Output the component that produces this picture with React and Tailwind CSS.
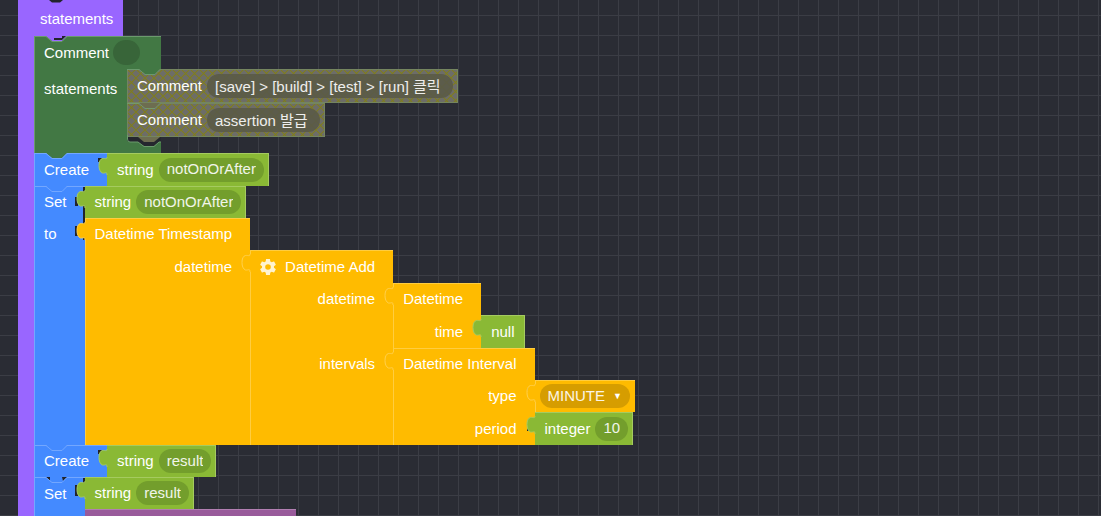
import React from "react";

const NOTCH = "M0 0 H12 L18 5 H28 L33 0";
const TAB = "C10 7 8.500 5 5.500 5.500 C3 6 2 9 2 12.500 C2 16 3 19 5.500 20 C8.500 20.500 10 18 10 22";

function Notch({ fill, stroke, gap }) {
  return (
    <svg className="pointer-events-none absolute top-0 left-0 z-10" width="36" height="8" viewBox="0 0 36 8" fill="none" aria-hidden="true">
      <path d="M12 0 L18 5 H28 L33 0 Z" fill={fill} />
      {gap && <path d={gap} fill="#22242b" />}
      <path d={NOTCH} transform="translate(0 .5)" stroke={stroke} />
    </svg>
  );
}

function Tab({ fill, stroke, gap }) {
  return (
    <svg className="pointer-events-none absolute top-0 -left-2.5 z-10" width="12" height="32" viewBox="0 0 12 32" fill="none" aria-hidden="true">
      {gap && <path d={gap} fill="#22242b" />}
      <path d={"M12 4 H10 " + TAB + " H12 Z"} fill={fill} />
      <path d={"M10 4 " + TAB} stroke={stroke} />
    </svg>
  );
}

const LIME = { bg: "bg-[#8ab935] shadow-[inset_-1px_1px_0_#a5cb60]", fill: "#8ab935", stroke: "#a5cb60" };
const AMBER = { bg: "bg-[#ffbb00] shadow-[inset_1px_1px_0_#ffcd40]", fill: "#ffbb00", stroke: "#ffd04c" };
const BLUE = "bg-[#448aff] shadow-[inset_1px_1px_0_#73a7ff]";

function Field({ label, value, className }) {
  return (
    <input
      aria-label={label}
      defaultValue={value}
      className={"field-sizing-content rounded-full pb-0.5 text-white/90 outline-none " + className}
    />
  );
}

function Value({ tone, gap, className = "h-8 pr-[5px]", children }) {
  return (
    <div className={"relative flex w-max items-center gap-[5px] pl-2.5 " + tone.bg + " " + className}>
      <Tab fill={tone.fill} stroke={tone.stroke} gap={gap} />
      {children}
    </div>
  );
}

function StringValue({ name, gap, className }) {
  return (
    <Value tone={LIME} gap={gap} className={className}>
      <span>string</span>
      <Field label="Variable name" value={name} className="h-6 bg-[#739e2c] px-2" />
    </Value>
  );
}

/* A block whose inputs hang to the right of its label column. */
function Outputs({ labels, gap, offset = "pt-8", children }) {
  return (
    <div className="relative flex w-max">
      <Tab fill={AMBER.fill} stroke={AMBER.stroke} gap={gap} />
      <div className={"pr-[18px] pl-2.5 " + AMBER.bg}>{labels}</div>
      <div className={offset}>{children}</div>
    </div>
  );
}

function Label({ children, className = "h-8 justify-end" }) {
  return <div className={"flex items-center " + className}>{children}</div>;
}

function CommentBlock({ text, above, aboveStroke }) {
  return (
    <div className="relative flex h-[34px] w-max items-center gap-[5px] bg-[#6d6d68] pr-[5px] pl-2.5">
      <svg className="absolute inset-0 h-full w-full" aria-hidden="true">
        <defs>
          <pattern id="crosshatch" width="9" height="9" patternUnits="userSpaceOnUse">
            <path d="M-1 -1 L10 10 M10 -1 L-1 10" stroke="#807d1c" strokeWidth="1.1" fill="none" />
          </pattern>
        </defs>
        <rect width="100%" height="100%" fill="url(#crosshatch)" />
      </svg>
      <div className="absolute inset-0 shadow-[inset_0_0_0_1px_#74855f]" />
      <Notch fill={above} stroke={aboveStroke} />
      <span className="relative">Comment</span>
      <Field label="Comment" value={text} className="relative h-6 bg-[#5a5a48]/90 pr-3 pl-2" />
    </div>
  );
}

function Gear() {
  return (
    <svg width="16" height="16" viewBox="2 2 20 20" fill="#fff3cf" aria-hidden="true">
      <path d="M19.430 12.980c.04-.32.070-.64.070-.98s-.03-.66-.07-.98l2.110-1.650c.19-.15.240-.42.120-.64l-2-3.460c-.12-.22-.39-.3-.61-.22l-2.490 1c-.52-.4-1.080-.73-1.690-.98l-.38-2.650C14.460 2.180 14.250 2 14 2h-4c-.25 0-.46.180-.49.420l-.38 2.650c-.61.250-1.170.590-1.690.980l-2.490-1c-.23-.09-.49 0-.61.220l-2 3.460c-.13.220-.07.490.120.640l2.110 1.650c-.04.320-.07.650-.07.980s.03.660.070.980l-2.110 1.650c-.19.150-.24.420-.12.640l2 3.460c.12.220.390.300.610.220l2.490-1c.52.400 1.080.730 1.690.980l.38 2.650c.03.240.240.420.490.420h4c.25 0 .46-.18.490-.42l.38-2.650c.61-.25 1.170-.59 1.690-.98l2.490 1c.23.090.490 0 .61-.22l2-3.460c.12-.22.070-.49-.12-.64l-2.110-1.650zM12 15.500a3.500 3.500 0 1 1 0-7 3.500 3.500 0 0 1 0 7z" />
    </svg>
  );
}

function Create({ name, above, className }) {
  return (
    <div className={"relative flex " + className}>
      <Notch fill={above} stroke="#73a7ff" />
      <div className={"flex items-center pr-[18px] pl-2.5 " + BLUE}>Create</div>
      <StringValue name={name} gap="M1 5 H5 V7 L3 9 H1 Z" className="h-full pr-[5px]" />
    </div>
  );
}

export default function App() {
  return (
    <main
      className="h-screen w-full overflow-hidden bg-[#2a2c34] bg-[linear-gradient(to_right,#3b3d45_1px,transparent_1px),linear-gradient(to_bottom,#3b3d45_1px,transparent_1px)] bg-size-[20px_20px] bg-position-[18px_15px] pl-[18px] text-[15px] leading-5 whitespace-nowrap text-white"
      style={{ fontFamily: '"Liberation Sans", "Noto Sans CJK KR", sans-serif' }}
    >
      <div className="relative flex h-9 w-max items-center bg-[#9966ff] pt-0.5 pr-2.5 pl-[22px]">
        <svg className="absolute top-0 left-7" width="20" height="4" viewBox="0 0 20 4" aria-hidden="true">
          <path d="M3 0 L6 2.500 H14 L17 0 Z" fill="#22242b" />
        </svg>
        statements
      </div>
      <div className="w-max bg-[linear-gradient(to_right,#9966ff_16px,transparent_16px)] pl-4">
        {/* Comment with nested statements */}
        <div className="relative w-max">
          <Notch fill="#9966ff" stroke="#6b9a6d" gap="M20 2 H28 V4 H20 Z M28 0 H32 L28 4 Z" />
          <div className="flex h-[33px] w-[127px] items-center gap-1 bg-[#427844] pl-2.5 shadow-[inset_0_1px_0_#6b9a6d,inset_1px_0_0_#6b9a6d]">
            Comment
            <Field label="Comment" value="" className="h-[25px] w-[27px] bg-[#386539]" />
          </div>
          <div className="flex">
            <div className="w-[93px] bg-[#427844] pt-2.5 pl-2.5 shadow-[inset_1px_0_0_#6b9a6d]">statements</div>
            <div className="pb-1">
              <CommentBlock text="[save] > [build] > [test] > [run] 클릭" above="#427844" aboveStroke="#6b9a6d" />
              <CommentBlock text="assertion 발급" above="#6d6d50" aboveStroke="#74996a" />
            </div>
          </div>
          <div className="relative h-3 w-[127px] bg-[#427844] shadow-[inset_1px_0_0_#6b9a6d]">
            <svg className="absolute -top-1.5 left-[93px]" width="34" height="12" viewBox="0 0 34 12" fill="none" aria-hidden="true">
              <path d="M0 2 H34 V7 H32 L27 11 H17 L11 7 H3 Q0 7 0 4 Z" fill="#25272e" />
              <path d="M.5 0 V4 Q.5 7 3 7 H11 L17 11.500 H27 L32 7 H34" stroke="#6b9a6d" />
              <path d="M11 2 L17 7 H27 L33 2 Z" fill="#6d6d50" />
            </svg>
          </div>
        </div>

        <Create name="notOnOrAfter" above="#427844" className="h-[33px]" />

        {/* Set notOnOrAfter */}
        <div className="relative flex">
          <Notch fill="#448aff" stroke="#73a7ff" />
          <div className={"pr-[18px] pl-2.5 " + BLUE}>
            <Label className="h-8">Set</Label>
            <Label className="h-8">to</Label>
          </div>
          <div>
            <StringValue name="notOnOrAfter" gap="M0 11 H3 V20 H0 Z M8 1 H10 V6 H8 Z M8 20 H10 V32 H8 Z" />
            <Outputs
              gap="M0 8 H3 V18 H0 Z M8 0 H10 V6 H8 Z M8 20 H10 V22 H8 Z"
              labels={
                <>
                  <Label>Datetime Timestamp</Label>
                  <Label className="h-[33px] justify-end">datetime</Label>
                </>
              }
            >
              <Outputs
                offset="pt-[33px]"
                labels={
                  <>
                    <Label className="h-[33px] justify-end gap-[9px]">
                      <button type="button" aria-label="Edit intervals">
                        <Gear />
                      </button>
                      Datetime Add
                    </Label>
                    <Label>datetime</Label>
                    <Label className="mt-[33px] h-8 justify-end">intervals</Label>
                  </>
                }
              >
                <Outputs
                  labels={
                    <>
                      <Label>Datetime</Label>
                      <Label className="h-[33px] justify-end">time</Label>
                    </>
                  }
                >
                  <Value tone={LIME} className="h-[33px] pr-2.5">null</Value>
                </Outputs>
                <Outputs
                  labels={
                    <>
                      <Label>Datetime Interval</Label>
                      <Label>type</Label>
                      <Label className="h-[33px] justify-end">period</Label>
                    </>
                  }
                >
                  <Value tone={AMBER} gap="M2 8 H4 V11 H2 Z">
                    <label className="-ml-[5px] flex h-6 items-center gap-2 rounded-full bg-[#d69d00] px-2">
                      <select aria-label="Interval type" className="field-sizing-content appearance-none bg-transparent text-white/90 outline-none">
                        <option>MINUTE</option>
                      </select>
                      <span className="text-[9px] leading-5">▼</span>
                    </label>
                  </Value>
                  <Value tone={LIME} gap="M2 16 H4 V19 H2 Z" className="h-[33px] pr-[5px]">
                    <span>integer</span>
                    <Field label="Integer" value="10" className="h-6 bg-[#739e2c] px-2" />
                  </Value>
                </Outputs>
              </Outputs>
            </Outputs>
          </div>
        </div>

        <Create name="result" above="#448aff" className="h-8" />

        {/* Set result */}
        <div className="relative flex">
          <Notch fill="#448aff" stroke="#73a7ff" gap="M12 0 H16 V4 Z M28 0 H33 L29 4 Z" />
          <div className={"pr-[18px] pl-2.5 " + BLUE}>
            <Label className="h-[33px]">Set</Label>
          </div>
          <div>
            <StringValue name="result" gap="M0 8 H3 V19 H0 Z M8 1 H10 V6 H8 Z" />
            <div className="h-8 w-[211px] bg-[#995b9b] shadow-[inset_0_1px_0_#b27fb2]" />
          </div>
        </div>
      </div>
    </main>
  );
}
